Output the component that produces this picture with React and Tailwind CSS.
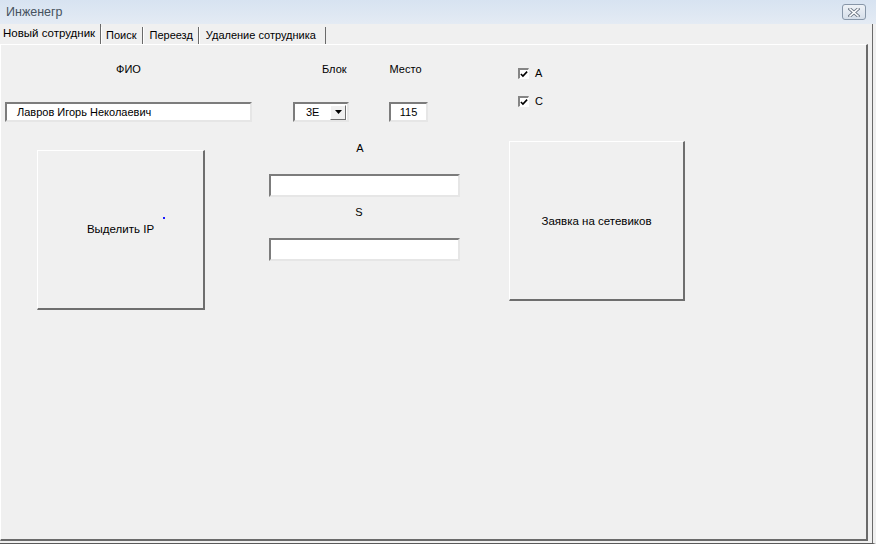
import React from "react";

const sunken = "bg-white border-2 border-t-[#7c7c7c] border-l-[#7c7c7c] border-b-[#e6e6e6] border-r-[#e6e6e6]";
const raised = "bg-[#f0f0f0] border-t border-l border-t-white border-l-white border-b-2 border-r-2 border-b-[#6e6e6e] border-r-[#6e6e6e]";

const CheckBox = ({ label }) => (
  <div className="flex items-center h-[11px] gap-[6px]">
    <div className="w-[11px] h-[11px] bg-white border-t-2 border-l-2 border-[#858585] border-b border-r border-b-white border-r-white flex items-center justify-center">
      <svg width="9" height="8" viewBox="0 0 9 8">
        <path d="M1 4 L3.3 6.3 L8 1.3" stroke="#000" strokeWidth="1.8" fill="none" />
      </svg>
    </div>
    <span className="text-[11px] leading-[11px]">{label}</span>
  </div>
);

export default function App() {
  return (
    <div className="w-[876px] h-[544px] bg-[#f0f0f0] flex flex-col text-black overflow-hidden" style={{ fontFamily: '"Liberation Sans", Arial, sans-serif' }}>
      {/* title bar */}
      <div className="h-[24px] flex items-center justify-between bg-gradient-to-b from-[#d7e3f1] to-[#e4ebf4] pl-[6px] pr-[10px] shrink-0">
        <span className="text-[12.5px] text-[#47535f]">Инженегр</span>
        <div className="w-[24px] h-[16px] rounded-[3px] border border-[#8796a8] bg-gradient-to-b from-[#eef2f7] to-[#d6dfea] flex items-center justify-center">
          <svg width="12" height="9" viewBox="0 0 12 9">
            <path d="M2 1 L10 8 M10 1 L2 8" stroke="#6b7583" strokeWidth="3.2" strokeLinecap="square" />
            <path d="M2 1 L10 8 M10 1 L2 8" stroke="#ffffff" strokeWidth="1.6" strokeLinecap="square" />
          </svg>
        </div>
      </div>

      <div className="flex-1 flex flex-col border-r-[3px] border-r-[#f0f0f0] border-b border-b-[#5a5a5a]">
        <div className="flex-1 flex flex-col border-r border-r-[#6a6a6a] pb-[2px]">
          {/* tabs */}
          <div className="h-[20px] flex items-end text-[11px] shrink-0">
            <div className="w-[101px] h-[20px] pl-[3px] pt-[2px] border-r border-r-[#6a6a6a] leading-[14px] text-[11.5px]">Новый сотрудник</div>
            <div className="h-[17px] pl-[4px] pr-[6px] border-l border-l-white border-r border-r-[#6a6a6a] leading-[16px]">Поиск</div>
            <div className="h-[17px] pl-[5px] pr-[5px] border-l border-l-white border-r border-r-[#6a6a6a] leading-[16px]">Переезд</div>
            <div className="h-[17px] pl-[6px] pr-[9px] border-l border-l-white border-r border-r-[#6a6a6a] leading-[16px]">Удаление сотрудника</div>
          </div>

          {/* page */}
          <div className="flex-1 flex border-t border-t-white border-l border-l-white mr-[4px] border-r-2 border-r-[#6a6a6a] border-b-2 border-b-[#6a6a6a] text-[11px]">
            {/* column 1 */}
            <div className="ml-[4px] w-[247px] flex flex-col">
              <div className="mt-[17px] h-[14px] leading-[14px] text-center">ФИО</div>
              <div className={`mt-[26px] h-[20px] ${sunken} flex items-center pl-[10px]`}>Лавров Игорь Неколаевич</div>
              <div className={`relative mt-[28px] ml-[32px] w-[168px] h-[160px] ${raised} flex items-center justify-center`}>
                <span className="text-[11.5px]">Выделить IP</span>
                <span className="absolute left-[125px] top-[66px] w-[2px] h-[2px] bg-[#1a1aff]" />
              </div>
            </div>

            {/* column 2 */}
            <div className="ml-[17px] w-[191px] flex flex-col">
              <div className="mt-[17px] h-[14px] leading-[14px] flex">
                <span className="ml-[53px]">Блок</span>
                <span className="ml-[43px]">Место</span>
              </div>
              <div className="mt-[26px] h-[20px] flex">
                <div className={`ml-[24px] w-[56px] h-[20px] ${sunken} flex items-center justify-between pl-[11px] pr-[1px]`}>
                  <span>3E</span>
                  <div className="w-[16px] h-[15px] bg-[#f0f0f0] border-t border-l border-t-white border-l-white border-b border-r border-b-[#6e6e6e] border-r-[#6e6e6e] flex items-center justify-center">
                    <svg width="7" height="4" viewBox="0 0 7 4"><path d="M0 0 H7 L3.5 4 Z" fill="#000" /></svg>
                  </div>
                </div>
                <div className={`ml-[40px] w-[39px] h-[20px] ${sunken} flex items-center justify-center`}>115</div>
              </div>
              <div className="mt-[19px] w-[182px] h-[14px] leading-[14px] text-center">A</div>
              <div className={`mt-[19px] h-[23px] ${sunken}`} />
              <div className="mt-[8px] w-[180px] h-[14px] leading-[14px] text-center">S</div>
              <div className={`mt-[19px] h-[23px] ${sunken}`} />
            </div>

            {/* column 3 */}
            <div className="ml-[49px] w-[176px] flex flex-col">
              <div className="mt-[23px] ml-[9px]"><CheckBox label="A" /></div>
              <div className="mt-[17px] ml-[9px]"><CheckBox label="C" /></div>
              <div className={`mt-[34px] w-[176px] h-[160px] ${raised} flex items-center justify-center`}>
                <span className="text-[11.5px] mt-[2px]">Заявка на сетевиков</span>
              </div>
            </div>
          </div>
        </div>
      </div>
    </div>
  );
}
